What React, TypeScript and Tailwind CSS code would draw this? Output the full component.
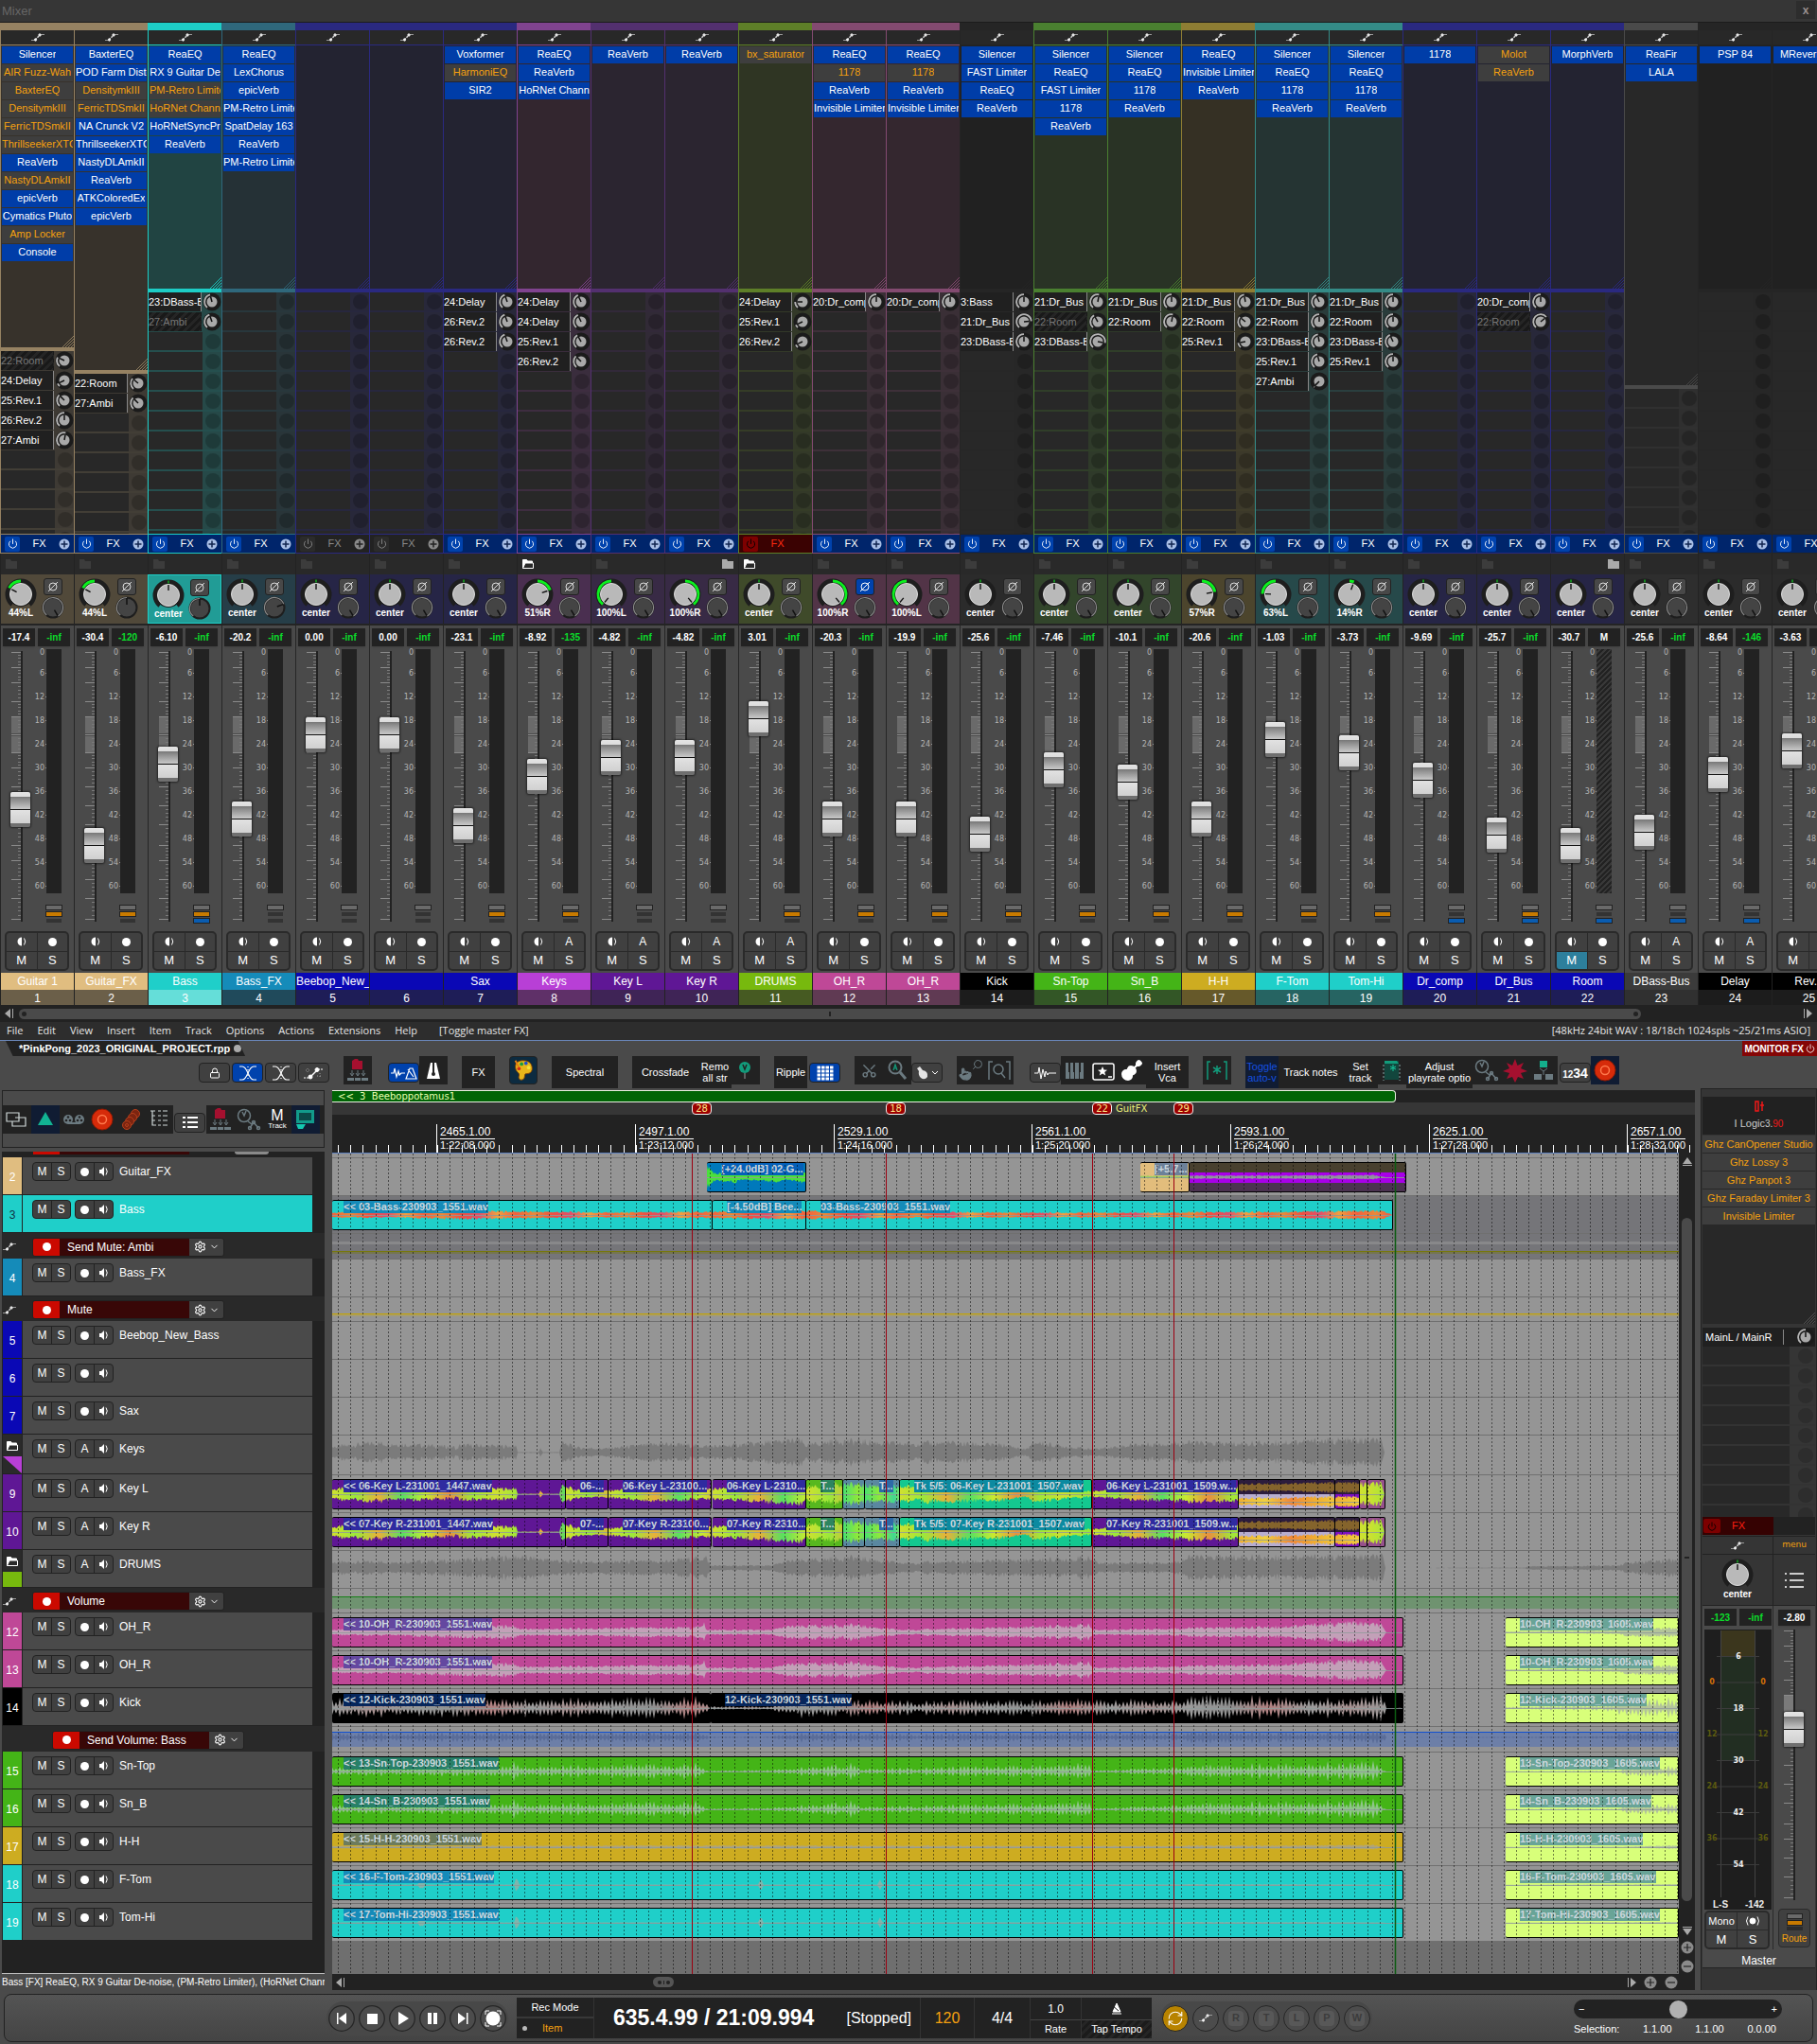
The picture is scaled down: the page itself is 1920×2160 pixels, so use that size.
import { Fragment, type ReactNode } from "react";
import clsx from "clsx";
import { Lock, Power, Settings, ChevronDown, Scissors, Search, Pointer, Palette, Guitar, RefreshCw } from "lucide-react";

/* ---------- palettes ---------- */

const palettes = {
  sand: { ink: "text-[#968262]", insert: "bg-[#37322b]", pan: "bg-[#51493a]", name: "bg-[#e0bd80]", num: "bg-[#6b5f49]" },
  teal: { ink: "text-[#1dcdc6]", insert: "bg-[#214442]", pan: "bg-[#219c96]", name: "bg-[#1fcfc9]", num: "bg-[#65ded9]" },
  steel: { ink: "text-[#2f687c]", insert: "bg-[#253136]", pan: "bg-[#263e48]", name: "bg-[#158bb9]", num: "bg-[#204a5b]" },
  navy: { ink: "text-[#2a2980]", insert: "bg-[#232331]", pan: "bg-[#262546]", name: "bg-[#0a08b5]", num: "bg-[#1e1d57]" },
  orchid: { ink: "text-[#80438f]", insert: "bg-[#33262f]", pan: "bg-[#4a2f50]", name: "bg-[#b83fd6]", num: "bg-[#5f3068]" },
  grape: { ink: "text-[#53306f]", insert: "bg-[#2b2530]", pan: "bg-[#382a45]", name: "bg-[#5f1795]", num: "bg-[#3f2456]" },
  olive: { ink: "text-[#5e7f28]", insert: "bg-[#2f3523]", pan: "bg-[#3f4a2a]", name: "bg-[#77b90e]", num: "bg-[#465a22]" },
  rose: { ink: "text-[#834a70]", insert: "bg-[#34272f]", pan: "bg-[#523447]", name: "bg-[#bf4897]", num: "bg-[#603a53]" },
  black: { ink: "text-[#252525]", insert: "bg-[#212121]", pan: "bg-[#2b2b2b]", name: "bg-[#000000]", num: "bg-[#1c1c1c]" },
  green: { ink: "text-[#4a8030]", insert: "bg-[#293325]", pan: "bg-[#32452b]", name: "bg-[#44b417]", num: "bg-[#335626]" },
  gold: { ink: "text-[#8e7d33]", insert: "bg-[#353024]", pan: "bg-[#4c452d]", name: "bg-[#cdac21]", num: "bg-[#66592a]" },
  aqua: { ink: "text-[#348b87]", insert: "bg-[#253433]", pan: "bg-[#26494a]", name: "bg-[#1fcfc9]", num: "bg-[#266462]" },
  grey: { ink: "text-[#4a4a4a]", insert: "bg-[#282828]", pan: "bg-[#2e2e2e]", name: "bg-[#3b3b3b]", num: "bg-[#303030]" },
};

type Tone = keyof typeof palettes;
type Send = [label: string, angle: number, muted?: boolean];

type Channel = {
  name: string;
  tone: Tone;
  fx: string[];
  sends?: Send[];
  pan: string;
  vol: string;
  peak?: string;
  fader: number;
  led?: string;
  auto?: boolean;
  insertHeight?: string;
  fxState?: "on" | "off" | "bypass";
  folder?: "open" | "close";
  flipped?: boolean;
  muted?: boolean;
};

// a leading "!" marks a bypassed plugin
const channels: Channel[] = [
  { name: "Guitar 1", tone: "sand", fx: ["Silencer", "!AIR Fuzz-Wah", "!BaxterEQ", "!DensitymkIII", "!FerricTDSmkII", "!ThrillseekerXTC", "ReaVerb", "!NastyDLAmkII", "epicVerb", "Cymatics Pluto", "!Amp Locker", "Console"], sends: [["22:Room", -65, true], ["24:Delay", -115], ["25:Rev.1", -45], ["26:Rev.2", 0], ["27:Ambi", 10]], pan: "44%L", vol: "-17.4", fader: 855, led: "o", insertHeight: "h-[319px]" },
  { name: "Guitar_FX", tone: "sand", fx: ["BaxterEQ", "POD Farm Disto", "!DensitymkIII", "!FerricTDSmkII", "NA Crunck V2", "ThrillseekerXTC", "NastyDLAmkII", "ReaVerb", "ATKColoredEx", "epicVerb"], sends: [["22:Room", -50], ["27:Ambi", -45]], pan: "44%L", vol: "-30.4", peak: "-120", fader: 893, led: "o", insertHeight: "h-[343px]" },
  { name: "Bass", tone: "teal", fx: ["ReaEQ", "RX 9 Guitar De", "!PM-Retro Limiter", "!HoRNet Chann", "HoRNetSyncPr", "ReaVerb"], sends: [["23:DBass-B", -15], ["27:Ambi", -20, true]], pan: "center", vol: "-6.10", fader: 807, led: "ob" },
  { name: "Bass_FX", tone: "steel", fx: ["ReaEQ", "LexChorus", "epicVerb", "PM-Retro Limiter", "SpatDelay 163", "ReaVerb", "PM-Retro Limiter"], pan: "center", vol: "-20.2", fader: 865 },
  { name: "Beebop_New_Bass", tone: "navy", fx: [], pan: "center", vol: "0.00", fader: 776, fxState: "off" },
  { name: "", tone: "navy", fx: [], pan: "center", vol: "0.00", fader: 776, fxState: "off" },
  { name: "Sax", tone: "navy", fx: ["Voxformer", "!HarmoniEQ", "SIR2"], sends: [["24:Delay", -20], ["26:Rev.2", -20], ["26:Rev.2", -20]], pan: "center", vol: "-23.1", fader: 872, led: "o" },
  { name: "Keys", tone: "orchid", fx: ["ReaEQ", "ReaVerb", "HoRNet Chann"], sends: [["24:Delay", -25], ["24:Delay", -25], ["25:Rev.1", -30], ["26:Rev.2", -45]], pan: "51%R", vol: "-8.92", peak: "-135", fader: 820, led: "o", auto: true, folder: "open" },
  { name: "Key L", tone: "grape", fx: ["ReaVerb"], pan: "100%L", vol: "-4.82", fader: 800, auto: true },
  { name: "Key R", tone: "grape", fx: ["ReaVerb"], pan: "100%R", vol: "-4.82", fader: 800, auto: true, folder: "close" },
  { name: "DRUMS", tone: "olive", fx: ["!bx_saturator"], sends: [["24:Delay", -90], ["25:Rev.1", -115], ["26:Rev.2", -115]], pan: "center", vol: "3.01", fader: 759, led: "o", auto: true, fxState: "bypass", folder: "open" },
  { name: "OH_R", tone: "rose", fx: ["ReaEQ", "!1178", "ReaVerb", "Invisible Limiter"], sends: [["20:Dr_comp", 0]], pan: "100%R", vol: "-20.3", fader: 865, led: "o", flipped: true },
  { name: "OH_R", tone: "rose", fx: ["ReaEQ", "!1178", "ReaVerb", "Invisible Limiter"], sends: [["20:Dr_comp", 0]], pan: "100%L", vol: "-19.9", fader: 865, led: "o" },
  { name: "Kick", tone: "black", fx: ["Silencer", "FAST Limiter", "ReaEQ", "ReaVerb"], sends: [["3:Bass", 0], ["21:Dr_Bus", 85], ["23:DBass-B", 0]], pan: "center", vol: "-25.6", fader: 881, led: "o" },
  { name: "Sn-Top", tone: "green", fx: ["Silencer", "ReaEQ", "FAST Limiter", "1178", "ReaVerb"], sends: [["21:Dr_Bus", 10], ["22:Room", -30, true], ["23:DBass-B", 100]], pan: "center", vol: "-7.46", fader: 813, led: "o" },
  { name: "Sn_B", tone: "green", fx: ["Silencer", "ReaEQ", "1178", "ReaVerb"], sends: [["21:Dr_Bus", 0], ["22:Room", 10]], pan: "center", vol: "-10.1", fader: 826, led: "o" },
  { name: "H-H", tone: "gold", fx: ["ReaEQ", "Invisible Limiter", "ReaVerb"], sends: [["21:Dr_Bus", -10], ["22:Room", -50], ["25:Rev.1", -100]], pan: "57%R", vol: "-20.6", fader: 865, led: "o" },
  { name: "F-Tom", tone: "aqua", fx: ["Silencer", "ReaEQ", "1178", "ReaVerb"], sends: [["21:Dr_Bus", -25], ["22:Room", 0], ["23:DBass-B", -10], ["25:Rev.1", -15], ["27:Ambi", -135]], pan: "63%L", vol: "-1.03", fader: 781, led: "o" },
  { name: "Tom-Hi", tone: "aqua", fx: ["Silencer", "ReaEQ", "1178", "ReaVerb"], sends: [["21:Dr_Bus", 0], ["22:Room", 0], ["23:DBass-B", -25], ["25:Rev.1", 0]], pan: "14%R", vol: "-3.73", fader: 795, led: "o" },
  { name: "Dr_comp", tone: "navy", fx: ["1178"], pan: "center", vol: "-9.69", fader: 824, led: "b" },
  { name: "Dr_Bus", tone: "navy", fx: ["!Molot", "!ReaVerb"], sends: [["20:Dr_comp", 0], ["22:Room", 50, true]], pan: "center", vol: "-25.7", fader: 882, led: "ob" },
  { name: "Room", tone: "navy", fx: ["MorphVerb"], pan: "center", vol: "-30.7", peak: "M", fader: 893, led: "b", muted: true, folder: "close" },
  { name: "DBass-Bus", tone: "grey", fx: ["ReaFir", "LALA"], pan: "center", vol: "-25.6", fader: 879, led: "b", auto: true, insertHeight: "h-[359px]" },
  { name: "Delay", tone: "black", fx: ["PSP 84"], pan: "center", vol: "-8.64", peak: "-146", fader: 818, led: "b", auto: true },
  { name: "Rev.1", tone: "black", fx: ["MReverbMB"], pan: "center", vol: "-3.63", fader: 793, led: "b", auto: true },
];

/* ---------- small drawings ---------- */

const polar = (cx: number, cy: number, r: number, deg: number) => {
  const a = ((deg - 90) * Math.PI) / 180;
  return [cx + r * Math.cos(a), cy + r * Math.sin(a)];
};

const arc = (cx: number, cy: number, r: number, from: number, to: number) => {
  const [a, b] = from < to ? [from, to] : [to, from];
  const [x1, y1] = polar(cx, cy, r, a);
  const [x2, y2] = polar(cx, cy, r, b);
  return `M${x1} ${y1}A${r} ${r} 0 ${b - a > 180 ? 1 : 0} 1 ${x2} ${y2}`;
};

const EnvelopeIcon = ({ className = "" }: { className?: string }) => (
  <svg viewBox="0 0 16 9" className={clsx("h-[9px] w-4", className)} fill="none" stroke="#ddd">
    <path d="M1 7.500h4M11 1.500h4" stroke="#999" />
    <path d="M5.500 7 10 2" strokeWidth="1.400" strokeDasharray="2 1" />
    <circle cx="5.500" cy="7" r="1.200" fill="#fff" />
    <circle cx="10" cy="2" r="1.200" fill="#fff" />
  </svg>
);

const PanKnob = ({ pan }: { pan: string }) => {
  const n = parseInt(pan) || 0;
  const deg = pan === "center" ? 0 : (pan.endsWith("L") ? -n : n) * 1.4;
  const [x, y] = polar(17, 17, 11, deg);
  const [x0, y0] = polar(17, 17, 5, deg);
  return (
    <svg viewBox="0 0 34 34" className="size-[34px]">
      <path d={arc(17, 17, 14, -140, 140)} stroke="#1e1e1e" strokeWidth="5" fill="none" />
      <circle cx="17" cy="17" r="13" fill="#1e1e1e" />
      <path d={deg ? arc(17, 17, 14, 0, deg) : "M17 1.500v3"} stroke="#0bf01e" strokeWidth={deg ? 3 : 1} fill="none" />
      <circle cx="17" cy="17" r="11.500" fill="#b9b9b9" stroke="#dcdcdc" />
      <path d={`M${x0} ${y0}L${x} ${y}`} stroke="#111" strokeWidth="1.400" />
    </svg>
  );
};

const WidthKnob = ({ deg }: { deg: number }) => {
  const [x, y] = polar(12, 12, 10, deg);
  const [x0, y0] = polar(12, 12, 3, deg);
  return (
    <svg viewBox="0 0 24 24" className="size-6">
      <circle cx="12" cy="12" r="10.500" fill="#444" stroke="#1e1e1e" strokeWidth="2" />
      <path d={arc(12, 12, 10.5, -140, deg)} stroke="#8a8a8a" strokeWidth="1.200" fill="none" />
      <path d={`M${x0} ${y0}L${x} ${y}`} stroke="#111" strokeWidth="1.500" />
    </svg>
  );
};

const SendKnob = ({ deg }: { deg: number }) => {
  const [x, y] = polar(10, 10, 5.5, deg);
  return (
    <svg viewBox="0 0 20 20" className="ml-px h-5 w-5 shrink-0">
      <circle cx="10" cy="10" r="9.500" fill="#1b1b1b" />
      <path d={arc(10, 10, 7.8, -140, deg)} stroke="#b5b5b5" strokeWidth="1.800" fill="none" />
      <circle cx="10" cy="10" r="5.500" fill="#a9a9a9" />
      <path d={`M10 10L${x} ${y}`} stroke="#111" strokeWidth="1.500" />
    </svg>
  );
};

const Hatch = () => (
  <svg viewBox="0 0 12 12" className="size-3" stroke="currentColor">
    <path d="M0 12 12 0M3 12l9-9M6 12l6-6M9 12l3-3" strokeWidth=".9" />
  </svg>
);

const PhaseIcon = () => (
  <svg viewBox="0 0 12 12" className="size-3" fill="none" stroke="currentColor">
    <circle cx="6" cy="6" r="4" />
    <path d="M1 11 11 1" />
  </svg>
);

const FolderIcon = ({ className }: { className: string }) => (
  <svg viewBox="0 0 12 10" className={clsx("h-[10px] w-3", className)} fill="currentColor">
    <path d="M0 0h5l1 2h6v8H0z" />
  </svg>
);

const OpenFolder = () => (
  <svg viewBox="0 0 12 10" className="h-[10px] w-3">
    <path d="M.5 9.500V.5h4l1 1.500h5v2" fill="#fff" stroke="#fff" />
    <path d="M.5 9.500 3 4h8.500v5.500z" fill="#2a2a2a" stroke="#fff" />
  </svg>
);

const SpeakerIcon = () => (
  <svg viewBox="0 0 12 12" className="size-3" fill="#fff">
    <path d="M1 4h2l3-3v10L3 8H1z" />
    <path d="M8 2.500q2.500 3.500 0 7" fill="none" stroke="#fff" />
  </svg>
);

const MonitorIcon = () => (
  <svg viewBox="0 0 12 12" className="size-3">
    <path d="M6 1.500a4.500 4.500 0 0 0 0 9z" fill="#fff" />
    <path d="M8.500 2.500q2.500 3.500 0 7" fill="none" stroke="#fff" />
  </svg>
);

const RecDot = () => <span className="size-[9px] rounded-full bg-white" />;

const RedFolder = () => (
  <svg viewBox="0 0 30 30" className="size-[30px]">
    <path d="M9 14V5l3-2h3l1 2h4v9z" fill="#a5102f" />
    <path d="M9 15v5m-2-2 2 3 2-3M15 15v5m-2-2 2 3 2-3M21 15v5m-2-2 2 3 2-3" stroke="#6b7a80" fill="none" />
    <path d="M4 23h7v3H4zM12 23h6v3h-6zM19 23h7v3h-7z" fill="#6b7a80" />
  </svg>
);

const ClockIcon = () => (
  <svg viewBox="0 0 30 30" className="size-[30px]" fill="none" stroke="#6b7a80" strokeWidth="1.500">
    <circle cx="10" cy="11" r="6.500" />
    <path d="m8 7 2 4 2-5M14 17l4 3M16 24l4-6 5 6" />
    <circle cx="16" cy="24" r="1.500" />
    <circle cx="20" cy="18" r="1.500" />
    <circle cx="25" cy="24" r="1.500" />
  </svg>
);

const RedRing = () => (
  <svg viewBox="0 0 30 30" className="size-[30px]">
    <circle cx="15" cy="15" r="11" fill="#d62b0a" stroke="#8c1a04" />
    <circle cx="15" cy="15" r="4.500" fill="none" stroke="#ff7a4d" strokeWidth="1.500" />
  </svg>
);

/* ---------- mixer ---------- */

const thumb =
  "[&::-webkit-slider-thumb]:appearance-none [&::-webkit-slider-thumb]:h-[37px] [&::-webkit-slider-thumb]:w-[21px] [&::-webkit-slider-thumb]:rounded-[2px] [&::-webkit-slider-thumb]:shadow-[0_0_2px_1px_rgba(0,0,0,.5)] [&::-webkit-slider-thumb]:bg-[linear-gradient(180deg,#e4e4e4_0,#dcdcdc_5px,#777_5px,#8c8c8c_8px,#c9c9c9_18px,#111_18px,#111_19px,#e2e2e2_19px,#d0d0d0_33px,#6f6f6f_33px)]";

const majorTicks = [1, 17, 33, 53, 69, 88, 107, 123, 143, 163, 183, 205, 221, 241, 261, 283];
const dbMarks = [0, 6, 12, 18, 24, 30, 36, 42, 48, 54, 60];

const FaderScale = () => (
  <svg viewBox="0 0 78 290" className="absolute top-[2px] left-0 h-[290px] w-[78px] overflow-visible">
    {majorTicks.map((y, i) => (
      <Fragment key={y}>
        <path d={`M11 ${y + 0.5}h10`} stroke="#8a8a8a" />
        {majorTicks[i + 1] &&
          [1, 2, 3, 4].map((k) => (
            <path key={k} d={`M18 ${Math.round(y + ((majorTicks[i + 1] - y) * k) / 5) + 0.5}h3`} stroke="#7c7c7c" />
          ))}
      </Fragment>
    ))}
    <path d="M11 70h10v17H11zM11 90h10v17H11z" fill="#777" opacity=".7" />
    <path d="M22 0v286" stroke="#222" strokeWidth="2" />
    {dbMarks.map((db, i) => {
      const y = i === 0 ? 1 : 23 + (i - 1) * 25;
      return (
        <Fragment key={db}>
          <text x="46" y={y + 3} fontSize="8" textAnchor="end" fill="#b4b4b4" className="font-['DejaVu_Sans']">
            {db}
          </text>
          {i > 0 && <path d={`M47 ${y + 0.5}h3`} stroke="#999" />}
        </Fragment>
      );
    })}
  </svg>
);

const padKey = "flex items-center justify-center text-white text-[13px] leading-none";

const ChannelStrip = ({ ch, index }: { ch: Channel; index: number }) => {
  const p = palettes[ch.tone];
  const sends = ch.sends ?? [];
  const state = ch.fxState ?? "on";

  return (
    <section aria-label={ch.name || `Track ${index}`} className={clsx("flex w-[78px] shrink-0 flex-col", p.ink)}>
      <div className="h-2 bg-current" />
      <div className="flex h-[532px] flex-col overflow-hidden border-l border-current bg-[#282828]">
        <button aria-label="Envelopes" className="flex h-4 shrink-0 items-center justify-center border-b border-current">
          <EnvelopeIcon />
        </button>
        <div className={clsx("relative flex shrink-0 flex-col gap-px px-px pt-px", p.insert, ch.insertHeight ?? "h-[257px]")}>
          {ch.fx.map((name, i) => {
            const off = name.startsWith("!");
            return (
              <button
                key={i}
                className={clsx(
                  "flex h-[18px] justify-center overflow-hidden text-[11px] leading-[17px] whitespace-nowrap",
                  off ? "bg-[#3e3e3e] text-[#f5a00f]" : "bg-[#003da8] text-white",
                )}
              >
                <span className="max-w-full overflow-hidden">{off ? name.slice(1) : name}</span>
              </button>
            );
          })}
          <div className="absolute right-0 bottom-0">
            <Hatch />
          </div>
        </div>
        <div className="h-1 shrink-0 bg-current" />
        <div className="flex flex-1 flex-col overflow-hidden bg-current/20">
          {sends.map(([label, deg, muted], i) => (
            <button key={i} className="mb-px flex h-5 shrink-0 items-center">
              <span
                className={clsx(
                  "h-5 w-[56px] overflow-hidden border-r bg-[#202020] text-left text-[11px] leading-5 whitespace-nowrap",
                  muted
                    ? "border-transparent bg-[repeating-linear-gradient(135deg,#191919_0_3px,#252525_3px_6px)] text-[#777]"
                    : "border-[#888] text-white",
                )}
              >
                {label}
              </span>
              <SendKnob deg={deg} />
            </button>
          ))}
          {Array.from({ length: 13 }, (_, i) => (
            <div key={i} className="flex h-[21px] shrink-0 items-center gap-[3px] border-b-2 border-current/5">
              <span className="h-full w-[57px] bg-[#282828]" />
              <span className="size-4 rounded-full bg-black/20" />
            </div>
          ))}
        </div>
      </div>
      <div
        className={clsx(
          "flex h-[21px] items-center justify-between border border-r-0 border-current px-1 text-[11px]",
          state === "on" && "bg-[#00256b]",
          state === "off" && "bg-[#222]",
          state === "bypass" && "bg-[#3a0202]",
        )}
      >
        <button
          aria-label="Bypass FX"
          className={clsx(
            "flex h-4 w-4 items-center justify-center rounded-[2px]",
            state === "on" && "bg-[#0042ad] text-white",
            state === "off" && "bg-[#2b2b2b] text-[#888]",
            state === "bypass" && "bg-[#7d0000] text-black",
          )}
        >
          <Power size={11} />
        </button>
        <button className={clsx(state === "on" ? "text-white" : state === "off" ? "text-[#8a8a8a]" : "text-[#ff2a10]")}>FX</button>
        {state === "bypass" ? (
          <span className="w-3" />
        ) : (
          <svg viewBox="0 0 12 12" className="size-3">
            <circle cx="6" cy="6" r="5.500" fill={state === "on" ? "#a9bfe6" : "#8a8a8a"} />
            <path d="M6 2.500v7M2.500 6h7" stroke={state === "on" ? "#10254f" : "#222"} strokeWidth="1.500" />
          </svg>
        )}
      </div>
      <div className="flex h-[22px] items-center border-l border-[#232323] bg-[#292929] px-[5px]">
        {ch.folder === "open" ? (
          <OpenFolder />
        ) : (
          <FolderIcon className={ch.folder === "close" ? "ml-auto text-[#aaa]" : "text-[#3c3c3c]"} />
        )}
      </div>
      <div
        className={clsx(
          "flex h-[52px] justify-between border-l px-1 pt-1",
          p.pan,
          ch.tone === "teal" ? "border border-[#1dcdc6]" : "border-[#232323]",
        )}
      >
        <div className="flex w-[34px] flex-col items-center">
          <PanKnob pan={ch.pan} />
          <span className="-mt-[3px] text-[10px] leading-3 font-semibold text-white">{ch.pan}</span>
        </div>
        <div className="flex flex-col items-center gap-px pr-[6px]">
          <button
            aria-label="Phase"
            className={clsx(
              "flex h-[18px] w-5 items-center justify-center rounded-[3px] border border-[#222]",
              ch.flipped ? "bg-[#0042ad] text-white" : "bg-[#484848] text-[#ddd]",
            )}
          >
            <PhaseIcon />
          </button>
          <WidthKnob deg={index === 2 || index === 3 ? 0 : index === 4 ? 70 : 150} />
        </div>
      </div>
      <div className="mt-[2px] flex h-[367px] flex-col border-l border-[#262626] bg-[#4a4a4a]">
        <div className="flex h-[25px] justify-between px-[2px] pt-[3px] text-[10px] font-bold">
          <span className="flex h-[19px] w-[34px] items-center justify-center bg-[#222] text-white shadow">{ch.vol}</span>
          <span className={clsx("mr-[2px] flex h-[19px] w-[34px] items-center justify-center bg-[#222] shadow", ch.peak === "M" ? "text-white" : "text-[#0bdc2a]")}>
            {ch.peak ?? "-inf"}
          </span>
        </div>
        <div className="relative h-[298px]">
          <FaderScale />
          <div
            className={clsx(
              "absolute top-0 left-[48px] h-[258px] w-4",
              ch.muted ? "bg-[repeating-linear-gradient(135deg,#222_0_2px,#383838_2px_4px)]" : "bg-[#222]",
            )}
          />
          <div className="absolute top-[270px] left-[47px] flex w-[18px] flex-col gap-px">
            <span className="h-[6px] border border-[#222] bg-[#6a6a6a]" />
            <span className={clsx("h-[6px] border", ch.led?.includes("o") ? "border-[#222] bg-[#c87a00]" : "border-[#4a4a4a] bg-[#333]")} />
            <span className={clsx("h-[6px] border", ch.led?.includes("b") ? "border-[#222] bg-[#0a5cb0]" : "border-[#4a4a4a] bg-[#333]")} />
          </div>
          <input
            type="range"
            aria-label={`${ch.name} volume`}
            min={0}
            max={249}
            defaultValue={249 - (ch.fader - 706)}
            className={clsx("absolute top-[2px] left-[10px] h-[286px] w-[21px] appearance-none bg-transparent [direction:rtl] [writing-mode:vertical-lr]", thumb)}
          />
        </div>
        <div className="mx-1 mr-[5px] grid h-[42px] grid-cols-2 grid-rows-2 gap-px overflow-hidden rounded-[5px] border-2 border-[#2a2a2a] bg-[#2a2a2a] *:bg-[#404040]">
          <button aria-label="Monitor" className={padKey}>
            <MonitorIcon />
          </button>
          <button aria-label="Record arm" className={padKey}>
            {ch.auto ? <span className="text-[12px]">A</span> : <RecDot />}
          </button>
          <button className={clsx(padKey, ch.muted && "!bg-[#2d7f9c]")}>M</button>
          <button className={padKey}>S</button>
        </div>
      </div>
      <div className={clsx("h-[18px] overflow-hidden border-l border-[#222] text-center text-[12px] leading-[18px] whitespace-nowrap text-white", p.name)}>
        {ch.name}
      </div>
      <div className={clsx("h-4 border-l border-[#222] text-center text-[12px] leading-[18px] text-white", p.num)}>{index}</div>
    </section>
  );
};

const Mixer = () => (
  <div className="bg-[#242424]">
    <header className="flex h-6 items-start justify-between border-b border-[#1c1c1c] bg-[#363636] pl-[2px] text-[13px] text-[#666]">
      <h1 className="leading-6">Mixer</h1>
      <button aria-label="Close mixer" className="mt-px mr-[2px] h-[19px] w-5 bg-[#2d2d2d] text-[12px] font-bold text-[#998f8f]">
        x
      </button>
    </header>
    <div className="flex overflow-hidden">
      {channels.map((ch, i) => (
        <ChannelStrip key={i} ch={ch} index={i + 1} />
      ))}
    </div>
    <div className="flex h-[18px] items-center gap-[5px] bg-[#222] px-[5px]">
      <svg viewBox="0 0 10 10" className="size-[10px]" fill="#aaa">
        <path d="M6 0v10L0 5zM8 0h1v10H8z" />
      </svg>
      <div className="flex h-[11px] w-[1714px] items-center justify-between rounded-full bg-[#4a4a4a] px-[3px]">
        <span className="size-[5px] rounded-full bg-[#222]" />
        <span className="h-[5px] w-[2px] bg-[#222]" />
        <span className="size-[5px] rounded-full bg-[#222]" />
      </div>
      <svg viewBox="0 0 10 10" className="ml-auto size-[10px]" fill="#aaa">
        <path d="M4 0v10l6-5zM1 0h1v10H1z" />
      </svg>
    </div>
  </div>
);

/* ---------- menu and toolbar ---------- */

const MenuBar = () => (
  <nav className="flex h-5 items-center justify-between border-b border-[#6a86b8] bg-[#2d2d2d] px-[7px] font-['Open_Sans'] text-[11px] text-[#e6e6e6]">
    <div className="flex gap-[15px]">
      {["File", "Edit", "View", "Insert", "Item", "Track", "Options", "Actions", "Extensions", "Help"].map((m) => (
        <button key={m}>{m}</button>
      ))}
      <button className="ml-2">[Toggle master FX]</button>
    </div>
    <span>[48kHz 24bit WAV : 18/18ch 1024spls ~25/21ms ASIO]</span>
  </nav>
);

const RoundTool = ({ label, active, children }: { label: string; active?: boolean; children: ReactNode }) => (
  <button
    aria-label={label}
    className={clsx(
      "mt-[7px] flex h-[21px] w-[33px] shrink-0 items-center justify-center rounded-[4px] border border-[#222] text-white",
      active ? "bg-[#0042ad]" : "bg-[#404040]",
    )}
  >
    {children}
  </button>
);

const IconTool = ({ label, className, children }: { label: string; className?: string; children: ReactNode }) => (
  <button aria-label={label} className={clsx("flex h-[30px] w-[30px] shrink-0 items-center justify-center", className ?? "bg-[#222] text-[#6b7a80]")}>
    {children}
  </button>
);

const TextTool = ({ className, children }: { className: string; children: ReactNode }) => (
  <button className={clsx("h-[34px] shrink-0 overflow-hidden text-center text-[11px] leading-3", className)}>{children}</button>
);

const CrossIcon = () => (
  <svg viewBox="0 0 20 16" className="h-4 w-5" fill="none" stroke="#fff" strokeWidth="1.200">
    <path d="M1 1h3q3 0 6 7t6 7h3M1 15h3q3 0 6-7t6-7h3" />
    <path d="M10 1v14" strokeDasharray="1 2" />
  </svg>
);

const Toolbar = () => (
  <div className="flex h-9 min-w-0 items-start overflow-hidden pl-[210px] text-white">
    <div className="flex gap-[2px]">
      <RoundTool label="Lock">
        <Lock size={12} />
      </RoundTool>
      <RoundTool label="Auto crossfade" active>
        <CrossIcon />
      </RoundTool>
      <RoundTool label="Crossfade">
        <CrossIcon />
      </RoundTool>
      <RoundTool label="Envelope move">
        <svg viewBox="0 0 24 16" className="h-4 w-6" fill="none" stroke="#fff">
          <path d="M1 13h6M16 4h6" strokeDasharray="2 1" />
          <path d="m8 12 7-7" strokeWidth="1.400" />
          <path d="M5 3v6M18 8v6M3 5h5M15 11h6" stroke="#999" strokeDasharray="1 2" />
          <circle cx="8" cy="12" r="2" fill="#fff" />
          <circle cx="15" cy="4.500" r="2" fill="#fff" />
        </svg>
      </RoundTool>
    </div>
    <div className="ml-[15px]">
      <IconTool label="Folder">
        <RedFolder />
      </IconTool>
    </div>
    <div className="ml-[17px] flex">
      <RoundTool label="Stretch" active>
        <svg viewBox="0 0 28 16" className="h-4 w-7" fill="none" stroke="#fff" strokeWidth="1.200">
          <path d="M0 8h3l1-5 2 9 2-6 1 4 2-2h4M16 14l4-11h3l4 11zM18 4l6 8" />
        </svg>
      </RoundTool>
      <IconTool label="Metronome">
        <svg viewBox="0 0 30 30" className="size-[30px]" fill="#fff">
          <path d="M12 7h6l4 17H8z" />
          <path d="M15 6v13" stroke="#222" strokeWidth="2" />
          <circle cx="15" cy="19" r="2" fill="#222" />
        </svg>
      </IconTool>
    </div>
    <TextTool className="ml-[15px] w-[35px] bg-[#222]">FX</TextTool>
    <IconTool label="Colours" className="ml-[15px] rounded border border-[#222] bg-[#0c2b40]">
      <svg viewBox="0 0 30 30" className="size-[28px]">
        <path d="M15 4c7 0 10 4 10 9s-4 6-7 6c-2 0-1 3-2 5s-5 3-6 0c-1-2 1-3 0-5s-4-3-4-8 4-7 9-7z" fill="#e8b61a" stroke="#7a3d08" />
        <circle cx="13" cy="8" r="2" fill="#1a9c3c" />
        <circle cx="18" cy="7" r="2" fill="#1b4fd0" />
        <circle cx="21" cy="12" r="2" fill="#f3e23c" />
        <circle cx="10" cy="13" r="2" fill="#d02a1a" />
        <path d="m6 4 4 8" stroke="#e67c12" strokeWidth="2" />
      </svg>
    </IconTool>
    <TextTool className="ml-[15px] w-[70px] bg-[#222]">Spectral</TextTool>
    <TextTool className="ml-[15px] w-[70px] bg-[#222]">Crossfade</TextTool>
    <TextTool className="w-[35px] bg-[#222]">
      Remo
      <br />
      all str
    </TextTool>
    <IconTool label="Pin">
      <svg viewBox="0 0 30 30" className="size-[30px]">
        <circle cx="14" cy="12" r="6" fill="#129b7b" />
        <path d="m12 9 2 5 2-5" fill="none" stroke="#222" strokeWidth="1.500" />
        <path d="M14 18v6" stroke="#999" />
      </svg>
    </IconTool>
    <TextTool className="ml-[15px] w-[35px] bg-[#222]">Ripple</TextTool>
    <div className="ml-[2px]">
      <RoundTool label="Grid" active>
        <svg viewBox="0 0 18 16" className="h-4 w-[18px]" fill="#fff">
          {[0, 1, 2, 3].map((r) => [0, 1, 2, 3].map((c) => <rect key={`${r}${c}`} x={c * 4.5 + 0.5} y={r * 4 + 0.5} width="3.500" height="3" />))}
        </svg>
      </RoundTool>
    </div>
    <IconTool label="Cut" className="ml-[15px] bg-[#222] text-[#6b7a80]">
      <Scissors size={17} className="-rotate-90" />
    </IconTool>
    <IconTool label="Zoom all">
      <svg viewBox="0 0 30 30" className="size-[30px]" fill="none" stroke="#6b7a80" strokeWidth="2">
        <circle cx="13" cy="12" r="6.500" />
        <path d="m18 17 6 7" strokeWidth="3" />
        <path d="m11 15 2-6 2 6M12 13h2" stroke="#129b7b" strokeWidth="1.200" />
      </svg>
    </IconTool>
    <RoundTool label="Glue">
      <svg viewBox="0 0 26 16" className="h-4 w-[26px]">
        <path d="m2 3 3-2 3 4q6 1 5 7-3 4-7 1-3-3-2-7z" fill="#e4e4e4" />
        <path d="m18 6 3 3 3-3" stroke="#fff" fill="none" />
      </svg>
    </RoundTool>
    <div className="ml-[15px] flex">
      <IconTool label="Hand zoom">
        <Pointer size={14} className="mt-2" fill="currentColor" />
        <Search size={12} className="mb-3 -scale-x-100" />
      </IconTool>
      <IconTool label="Zoom selection">
        <svg viewBox="0 0 30 30" className="size-[30px]" fill="none" stroke="#6b7a80" strokeWidth="1.500">
          <path d="M8 6H4v19M22 6h4v19M17 18l4 5" />
          <circle cx="14" cy="14" r="5" />
        </svg>
      </IconTool>
    </div>
    <div className="ml-[17px] flex">
      <RoundTool label="Peaks">
        <svg viewBox="0 0 24 16" className="h-4 w-6" fill="none" stroke="#fff">
          <path d="M0 8h4l1-6 2 12 2-10 2 8 1-6 2 4 1-2h8" />
        </svg>
      </RoundTool>
      <IconTool label="Piano roll">
        <svg viewBox="0 0 30 30" className="size-[30px]" fill="#6b7a80">
          <path d="M5 7h4v17H5zM10 7h4v17h-4zM15 7h4v17h-4zM20 7h4v17h-4z" />
          <path d="M8 7h2v10H8zM13 7h2v10h-2zM19 7h2v10h-2z" fill="#222" />
        </svg>
      </IconTool>
      <IconTool label="Scripts" className="bg-[#222]">
        <svg viewBox="0 0 30 30" className="size-[30px]" fill="none" stroke="#fff" strokeWidth="1.500">
          <rect x="4" y="8" width="22" height="17" rx="2" />
          <path d="m14 11 1.500 3.500 3.500.3-2.800 2.300 1 3.500-3.200-2-3.200 2 1-3.500L9 14.800l3.500-.3z" fill="#fff" stroke="none" />
          <path d="M20 22h4" />
        </svg>
      </IconTool>
      <IconTool label="Guitar" className="bg-[#222] text-white">
        <Guitar size={24} fill="#fff" />
      </IconTool>
    </div>
    <TextTool className="w-[45px] bg-[#222]">
      Insert
      <br />
      Vca
    </TextTool>
    <IconTool label="New take" className="ml-[15px] bg-[#222] text-[#129b7b]">
      <svg viewBox="0 0 30 30" className="size-[30px]" fill="none" stroke="currentColor" strokeWidth="1.500">
        <path d="M8 6H5v19M22 6h3v19M15 10v9M11 12l8 5M19 12l-8 5" />
      </svg>
    </IconTool>
    <TextTool className="ml-[15px] w-[35px] bg-[#101c33] text-[#1450e0]">
      Toggle
      <br />
      auto-v
    </TextTool>
    <TextTool className="w-[68px] bg-[#222]">Track notes</TextTool>
    <TextTool className="w-[37px] bg-[#222]">
      Set
      <br />
      track
    </TextTool>
    <IconTool label="Fit item">
      <svg viewBox="0 0 30 30" className="size-[30px]">
        <path d="M7 5h15v20H7z" fill="#12463d" />
        <path d="M7 5h13l2 3H7z" fill="#129b7b" />
        <path d="M16 9v7m-3-5 6 3m0-3-6 3" stroke="#14c79c" />
        <path d="M6 9v17M23 9v17" stroke="#8aa" strokeDasharray="2 2" />
      </svg>
    </IconTool>
    <TextTool className="w-[70px] bg-[#222]">
      Adjust
      <br />
      playrate optio
    </TextTool>
    <IconTool label="Time map">
      <ClockIcon />
    </IconTool>
    <IconTool label="Burst">
      <svg viewBox="0 0 30 30" className="size-[30px]" fill="#a5102f">
        <path d="m15 3 2.500 7 6.500-3-3 6 7 3-7 2 3 6-6-2-3 6-3-6-6 2 3-6-7-2 7-3-3-6 6 3z" />
      </svg>
    </IconTool>
    <IconTool label="Routing">
      <svg viewBox="0 0 30 30" className="size-[30px]">
        <path d="M11 5h8v7h-8z" fill="#14b08c" />
        <path d="m11 13 4 3 4-3M15 16v4" stroke="#6b7a80" fill="none" />
        <path d="M5 19h8v6H5zM17 19h8v6h-8z" fill="#6b7a80" />
      </svg>
    </IconTool>
    <div className="ml-[2px] flex">
      <RoundTool label="Count in">
        <span className="text-[14px] leading-none font-bold">
          <small className="text-[10px]">12</small>34
        </span>
      </RoundTool>
      <IconTool label="Record mode" className="bg-[#101c33]">
        <RedRing />
      </IconTool>
    </div>
  </div>
);

/* ---------- arrange data ---------- */

type Wave = { profile: [number, number][]; spiky?: boolean };
type Clip = { from: number; to: number; label?: string; tone: string; wave?: string; pad?: number };
type Row = {
  kind: "track" | "env";
  h: string;
  no?: number;
  name: string;
  tone?: Tone;
  auto?: boolean;
  indent?: boolean;
  folder?: boolean;
  lane?: string;
  clips?: Clip[];
  sum?: string;
};

// clip positions count from the left edge of the arrange view
const waves: Record<string, Wave> = {
  guitar: { profile: [[396, 14], [405, 4], [425, 7], [435, 3], [470, 6], [480, 3], [530, 12], [545, 4], [580, 7], [600, 5]] },
  bass: { profile: [[0, 3], [80, 4], [140, 5], [300, 3], [520, 5], [700, 3], [850, 3], [1000, 4], [1100, 5], [1112, 4], [1121, 0], [1423, 0]] },
  keys: { profile: [[0, 7], [45, 12], [130, 7], [131, 3], [135, 9], [195, 8], [196, 0.5], [218, 0.5], [220, 5], [223, 0.5], [240, 0.5], [242, 12], [260, 6], [289, 5], [349, 11], [394, 8], [409, 8], [494, 15], [501, 9], [534, 15], [600, 11], [650, 12], [710, 9], [733, 4], [744, 13], [758, 10], [803, 4], [850, 10], [900, 12], [960, 11], [1050, 15], [1108, 15], [1112, 0], [1423, 0]] },
  drums: { profile: [[0, 7], [130, 9], [194, 14], [249, 8], [349, 8], [395, 13], [400, 3], [465, 3], [480, 8], [550, 13], [600, 6], [710, 9], [800, 12], [810, 6], [890, 7], [906, 13], [1050, 14], [1110, 14], [1113, 0], [1260, 0.5], [1263, 2], [1360, 3], [1365, 6], [1423, 10]] },
  oh: { profile: [[0, 3], [190, 8], [200, 4], [385, 6], [393, 12], [395, 3], [465, 3], [480, 7], [550, 9], [600, 3], [720, 6], [800, 9], [804, 3], [900, 5], [1000, 7], [1080, 12], [1108, 9], [1114, 0], [1262, 1], [1360, 2], [1365, 5], [1423, 5]] },
  kick: { profile: [[0, 11], [200, 10], [390, 12], [398, 2], [460, 2], [500, 11], [600, 8], [800, 10], [804, 9], [900, 11], [906, 15], [1080, 10], [1110, 15], [1114, 0], [1262, 2], [1355, 4], [1360, 10], [1423, 11]], spiky: true },
  snare: { profile: [[0, 5], [185, 6], [192, 13], [200, 6], [390, 9], [395, 1], [465, 2], [550, 9], [560, 3], [800, 9], [804, 1], [906, 7], [1100, 11], [1113, 0], [1262, 0.5], [1360, 1], [1365, 6], [1423, 6]], spiky: true },
  hat: { profile: [[0, 1.5], [400, 2], [800, 1.5], [1100, 2.5], [1113, 0], [1360, 0.5], [1423, 2]] },
  tom: { profile: [[0, 0.5], [90, 0.5], [95, 6], [99, 0.5], [192, 0.5], [195, 10], [198, 0.5], [450, 0.5], [453, 8], [456, 0.5], [576, 0.5], [579, 8], [582, 0.5], [1000, 1], [1110, 0.5], [1113, 0], [1360, 0.5], [1423, 1]] },
};

const clipTones: Record<string, { body: string; label: string; wave: string }> = {
  teal: { body: "bg-[#1fcfc9]", label: "bg-[#158bb9]", wave: "url(#hot)" },
  tomteal: { body: "bg-[#1fcfc9]", label: "bg-[#158bb9]", wave: "#7fb5ac" },
  blue: { body: "bg-[#0079bb]", label: "bg-[#0560b8]", wave: "#4be03c" },
  peach: { body: "bg-[#e2bd7c]", label: "bg-[#6d8199]", wave: "#9ccf60" },
  layered: { body: "bg-[linear-gradient(180deg,#48402f_0_10px,#a800e8_10px_21px,#4b3350_21px)]", label: "", wave: "#8f8fa0" },
  purple: { body: "bg-[#5f1795]", label: "bg-[#2f2ba0]", wave: "url(#vivid)" },
  lightgreen: { body: "bg-[#57b81f]", label: "bg-[#2d8560]", wave: "url(#vivid)" },
  slate: { body: "bg-[#5a88a0]", label: "bg-[#2d6aa8]", wave: "url(#lush)" },
  mint: { body: "bg-[#14c890]", label: "bg-[#0c8aa0]", wave: "url(#vivid)" },
  split: { body: "bg-[linear-gradient(180deg,#2c1c3c_0_15px,#b8aed0_15px)]", label: "", wave: "url(#amber)" },
  splitviolet: { body: "bg-[linear-gradient(180deg,#2c1c3c_0_15px,#7d10c4_15px)]", label: "", wave: "url(#amber)" },
  mauve: { body: "bg-[#96508c]", label: "", wave: "url(#vivid)" },
  pink: { body: "bg-[#bf4897]", label: "bg-[#6448a0]", wave: "#c3a0b8" },
  black: { body: "bg-black", label: "bg-[#06265c]", wave: "url(#ash)" },
  green: { body: "bg-[#44b417]", label: "bg-[#288068]", wave: "#8fc58a" },
  gold: { body: "bg-[#cdac21]", label: "bg-[#6d7c5c]", wave: "#b3a573" },
  lime: { body: "bg-[#d8ff7a]", label: "bg-[#69a497]", wave: "#b3c49a" },
};

const keyClips = (n: string, side: string): Clip[] => [
  { from: 0, to: 247, label: `<< ${n}-Key ${side}-231001_1447.wav`, tone: "purple", pad: 12 },
  { from: 247, to: 292, label: `${n}-...`, tone: "purple" },
  { from: 292, to: 401, label: `${n}-Key ${side}-23100...`, tone: "purple" },
  { from: 402, to: 501, label: `${n}-Key ${side}-2310...`, tone: "purple" },
  { from: 501, to: 540, label: "T...", tone: "lightgreen" },
  { from: 540, to: 563, tone: "slate" },
  { from: 563, to: 600, label: "T...", tone: "slate" },
  { from: 600, to: 803, label: `Tk 5/5: ${n}-Key ${side}-231001_1507.wav`, tone: "mint" },
  { from: 803, to: 958, label: `${n}-Key ${side}-231001_1509.w...`, tone: "purple" },
  { from: 958, to: 1060, tone: "split" },
  { from: 1060, to: 1086, tone: "splitviolet" },
  { from: 1086, to: 1094, tone: "mauve" },
  { from: 1094, to: 1113, tone: "mauve" },
];

const drumClips = (file: string, tone: string, wave: string): Clip[] => [
  { from: 0, to: 1132, label: `<< ${file}-230903_1551.wav`, tone, wave, pad: 12 },
  { from: 1240, to: 1423, label: `${file}-230903_1605.wav`, tone: "lime", wave },
];

const rows: Row[] = [
  { kind: "track", h: "h-[40px]", no: 2, name: "Guitar_FX", tone: "sand", clips: [
    { from: 396, to: 501, label: "[+24.0dB] 02-G...", tone: "blue", wave: "guitar" },
    { from: 854, to: 906, label: "[+5.7...", tone: "peach", wave: "hat" },
    { from: 906, to: 1135, tone: "layered", wave: "hat" },
  ] },
  { kind: "track", h: "h-[40px]", no: 3, name: "Bass", tone: "teal", lane: "bg-[#757579]", clips: [
    { from: 0, to: 402, label: "<< 03-Bass-230903_1551.wav", tone: "teal", wave: "bass", pad: 12 },
    { from: 402, to: 501, label: "[-4.50dB] Bee...", tone: "teal", wave: "bass" },
    { from: 501, to: 1121, label: "03-Bass-230903_1551.wav", tone: "teal", wave: "bass" },
  ] },
  { kind: "env", h: "h-[27px]", name: "Send Mute: Ambi", lane: "bg-[linear-gradient(180deg,#757579_0_8px,#88888a_8px_11px,#757579_11px_18px,#77770c_18px_19px,#757550_19px_21px,#757579_21px)]" },
  { kind: "track", h: "h-[40px]", no: 4, name: "Bass_FX", tone: "steel" },
  { kind: "env", h: "h-[26px]", name: "Mute", lane: "bg-[linear-gradient(180deg,#959595_0_17px,#c5a300_17px_18px,#a59c70_18px_20px,#959595_20px)]" },
  { kind: "track", h: "h-[40px]", no: 5, name: "Beebop_New_Bass", tone: "navy" },
  { kind: "track", h: "h-[40px]", no: 6, name: "", tone: "navy" },
  { kind: "track", h: "h-[40px]", no: 7, name: "Sax", tone: "navy" },
  { kind: "track", h: "h-[42px]", no: 8, name: "Keys", tone: "orchid", auto: true, folder: true, sum: "keys" },
  { kind: "track", h: "h-[40px]", no: 9, name: "Key L", tone: "grape", auto: true, indent: true, clips: keyClips("06", "L") },
  { kind: "track", h: "h-[40px]", no: 10, name: "Key R", tone: "grape", auto: true, indent: true, clips: keyClips("07", "R") },
  { kind: "track", h: "h-[40px]", no: 11, name: "DRUMS", tone: "olive", auto: true, folder: true, sum: "drums" },
  { kind: "env", h: "h-[26px]", name: "Volume", lane: "bg-[linear-gradient(180deg,#959595_0_8px,#178017_8px_9px,#6f9370_9px_21px,#959595_21px)]" },
  { kind: "track", h: "h-[40px]", no: 12, name: "OH_R", tone: "rose", indent: true, clips: drumClips("10-OH_R", "pink", "oh") },
  { kind: "track", h: "h-[40px]", no: 13, name: "OH_R", tone: "rose", indent: true, clips: drumClips("10-OH_R", "pink", "oh") },
  { kind: "track", h: "h-[40px]", no: 14, name: "Kick", tone: "black", indent: true, clips: [
    { from: 0, to: 400, label: "<< 12-Kick-230903_1551.wav", tone: "black", wave: "kick", pad: 12 },
    { from: 400, to: 1132, label: "12-Kick-230903_1551.wav", tone: "black", wave: "kick" },
    { from: 1240, to: 1423, label: "12-Kick-230903_1605.wav", tone: "lime", wave: "kick" },
  ] },
  { kind: "env", h: "h-[27px]", name: "Send Volume: Bass", indent: true, lane: "bg-[linear-gradient(180deg,#959595_0_5px,#1050d0_5px_6px,#6d7fa8_6px_21px,#959595_21px)]", sum: "kick" },
  { kind: "track", h: "h-[40px]", no: 15, name: "Sn-Top", tone: "green", indent: true, clips: drumClips("13-Sn-Top", "green", "snare") },
  { kind: "track", h: "h-[40px]", no: 16, name: "Sn_B", tone: "green", indent: true, clips: drumClips("14-Sn_B", "green", "snare") },
  { kind: "track", h: "h-[40px]", no: 17, name: "H-H", tone: "gold", indent: true, clips: drumClips("15-H-H", "gold", "hat") },
  { kind: "track", h: "h-[40px]", no: 18, name: "F-Tom", tone: "teal", indent: true, clips: drumClips("16-F-Tom", "tomteal", "tom") },
  { kind: "track", h: "h-[40px]", no: 19, name: "Tom-Hi", tone: "teal", indent: true, clips: drumClips("17-Tom-Hi", "tomteal", "tom") },
];

/* ---------- waveforms ---------- */

const noise = (n: number) => {
  const s = Math.sin(n * 12.9898) * 43758.5453;
  return s - Math.floor(s);
};

const level = (profile: [number, number][], x: number) => {
  for (let i = 1; i < profile.length; i++) {
    const [x1, a1] = profile[i - 1];
    const [x2, a2] = profile[i];
    if (x <= x2) return x < x1 ? a1 : a1 + ((a2 - a1) * (x - x1)) / (x2 - x1);
  }
  return 0;
};

const wavePath = (wave: Wave, from: number, to: number, mid: number, gain = 1) => {
  const step = wave.spiky ? 2 : 1;
  let top = "";
  let bottom = "";
  let i = 0;
  for (let x = from; x <= to; x += step, i++) {
    const dip = wave.spiky && i % 2 ? 0.15 : 1;
    const a = level(wave.profile, x) * (0.5 + 0.6 * noise(x + 3)) * dip * gain;
    top += `${i ? "L" : "M"}${x - from} ${(mid - a).toFixed(1)}`;
    bottom = `L${x - from} ${(mid + a * (0.8 + 0.2 * noise(x))).toFixed(1)}` + bottom;
  }
  return `${top}${bottom}Z`;
};

const ClipBox = ({ clip }: { clip: Clip }) => {
  const tone = clipTones[clip.tone];
  const w = clip.to - clip.from;
  const split = clip.tone.startsWith("split");
  return (
    <div
      className={clsx("absolute top-1 h-8 overflow-hidden rounded-[2px] border border-l-0 border-black", clip.from > 0 && "border-l", tone.body)}
      style={{ left: clip.from, width: w }}
    >
      <svg width={w} height="30" className="absolute top-0 left-0">
        {split && <path d={wavePath(waves.keys, clip.from, clip.to, 8, 0.4)} fill="#85642c" />}
        <path d={wavePath(waves[clip.wave ?? "keys"], clip.from, clip.to, split ? 23 : 15, split ? 0.4 : clip.wave ? 1 : 0.85)} fill={tone.wave} />
        <path d={`M0 ${split ? 23.5 : 15.5}H${w}`} stroke="#8f9a9a" opacity=".8" />
      </svg>
      {clip.label && (
        <span
          className={clsx(
            "relative block h-[13px] w-fit max-w-full overflow-hidden text-[11px] leading-[13px] font-bold whitespace-nowrap text-[#ccd6dc]",
            tone.label,
            clip.pad ? "ml-3" : "ml-[15px]",
          )}
        >
          {clip.label}
        </span>
      )}
    </div>
  );
};

const WaveDefs = () => {
  const sets: [string, number, string[]][] = [
    ["hot", 97, ["#f4603c", "#e98a3a", "#f05040", "#e0506a", "#f0a040", "#f4603c"]],
    ["vivid", 173, ["#d0e030", "#9be83a", "#e8b03a", "#58e060", "#c8ea30", "#e89040", "#a0e838", "#d0e030"]],
    ["lush", 61, ["#48e070", "#8fe83a", "#40d890", "#c8ea30", "#48e070"]],
    ["amber", 83, ["#f0b030", "#f0d040", "#f08838", "#f0b030"]],
    ["ash", 211, ["#9a9a9a", "#a58f8f", "#9a9a9a", "#8f8f8f", "#b08080", "#9a9a9a"]],
  ];
  return (
    <svg className="absolute size-0" aria-hidden>
      <defs>
        {sets.map(([id, len, colors]) => (
          <linearGradient key={id} id={id} gradientUnits="userSpaceOnUse" x1="0" x2={len} y1="0" y2="0" spreadMethod="repeat">
            {colors.map((c, i) => (
              <stop key={i} offset={i / (colors.length - 1)} stopColor={c} />
            ))}
          </linearGradient>
        ))}
      </defs>
    </svg>
  );
};

/* ---------- track control panel ---------- */

const TcpToolbar = () => (
  <div className="flex h-[61px] shrink-0 items-center overflow-hidden border border-[#222] text-[#6b7a80]">
    <IconTool label="Windows">
      <svg viewBox="0 0 30 30" className="size-[30px]" fill="none" stroke="#cfd8d8" strokeWidth="1.200">
        <path d="M4 8h13v9H4zM13 13h11v9H10v-5" />
      </svg>
    </IconTool>
    <IconTool label="Triangle" className="bg-[#101c33]">
      <svg viewBox="0 0 30 30" className="size-[30px]" fill="#12b393">
        <path d="m15 7 8 14H7z" />
      </svg>
    </IconTool>
    <IconTool label="Reels">
      <svg viewBox="0 0 30 30" className="size-[30px]" fill="#6b7a80">
        <circle cx="9" cy="15" r="5" />
        <circle cx="21" cy="15" r="5" />
        <path d="M9 18h12v2H9z" />
        <g fill="#222">
          <circle cx="9" cy="12.500" r="1.300" />
          <circle cx="7" cy="16" r="1.300" />
          <circle cx="11" cy="16" r="1.300" />
          <circle cx="21" cy="12.500" r="1.300" />
          <circle cx="19" cy="16" r="1.300" />
          <circle cx="23" cy="16" r="1.300" />
        </g>
      </svg>
    </IconTool>
    <IconTool label="Record">
      <RedRing />
    </IconTool>
    <IconTool label="Takes">
      <svg viewBox="0 0 30 30" className="size-[30px]" fill="#7c2410" stroke="#b5401c">
        {[0, 1, 2, 3].map((i) => (
          <circle key={i} cx={20 - i * 3} cy={9 + i * 4} r="4.500" />
        ))}
        <circle cx="11" cy="21" r="1.500" fill="none" />
      </svg>
    </IconTool>
    <IconTool label="Tracks">
      <svg viewBox="0 0 30 30" className="size-[30px]" fill="none" stroke="#cfd8d8" strokeWidth="1.200">
        <path d="M6 6h5M8 6v15h4M8 11h3M8 16h3M14 6h3M19 6h5M14 11h3M19 11h5M14 16h3M19 16h5M14 21h3M19 21h5" />
      </svg>
    </IconTool>
    <div className="mx-px">
      <RoundTool label="List">
        <svg viewBox="0 0 16 14" className="h-[14px] w-4" stroke="#fff" strokeWidth="2">
          <path d="M0 2h3M5 2h11M0 7h3M5 7h11M0 12h3M5 12h11" />
        </svg>
      </RoundTool>
    </div>
    <IconTool label="Folder">
      <RedFolder />
    </IconTool>
    <IconTool label="Time map">
      <ClockIcon />
    </IconTool>
    <IconTool label="M track" className="flex-col bg-[#222] text-white">
      <span className="text-[16px] leading-[14px]">M</span>
      <span className="text-[8px] leading-[8px]">Track</span>
    </IconTool>
    <IconTool label="Screen" className="bg-[#101c33]">
      <svg viewBox="0 0 30 30" className="size-[30px]">
        <path d="M5 5h19v14H5z" fill="#129b8b" />
        <path d="M8 8h13v8H8z" fill="#0b4a48" />
        <path d="M5 20h10l-3 5H7z" fill="#14c7b0" />
      </svg>
    </IconTool>
    <div className="h-[30px] flex-1 bg-[#222]" />
  </div>
);

const pair = "flex h-5 w-[41px] overflow-hidden rounded-[4px] border border-[#222] bg-[#404040] text-[12px] text-white divide-x divide-[#222]";
const pairKey = "flex flex-1 items-center justify-center leading-none";

const TrackRow = ({ row }: { row: Row }) => {
  const p = palettes[row.tone ?? "grey"];
  const selected = row.name === "Bass";
  return (
    <div className={clsx("flex shrink-0 pl-px", row.h, row.indent && "pl-[22px]")}>
      <div className={clsx("flex w-5 shrink-0 flex-col border-b border-[#222] text-[12px]", row.folder ? "bg-[#2a2a2a]" : p.name)}>
        {row.folder ? (
          <>
            <span className="flex h-[23px] items-center justify-center">
              <OpenFolder />
            </span>
            {row.tone === "orchid" ? (
              <svg viewBox="0 0 20 18" className="h-[18px] w-5" fill="#b83fd6">
                <path d="M0 0h20v18z" />
              </svg>
            ) : (
              <span className={clsx("flex-1", p.name)} />
            )}
          </>
        ) : (
          <span className={clsx("mt-auto mb-3 text-center leading-none", selected ? "text-[#134]" : "text-white")}>{row.no}</span>
        )}
      </div>
      <div className={clsx("ml-px flex flex-1 gap-1 border-b border-[#222] pt-[5px] pl-[10px]", selected ? "bg-[#1fcfc9]" : "bg-[#4a4a4a]")}>
        <div className={pair}>
          <button className={pairKey}>M</button>
          <button className={pairKey}>S</button>
        </div>
        <div className={pair}>
          <button aria-label="Record arm" className={pairKey}>
            {row.auto ? "A" : <RecDot />}
          </button>
          <button aria-label="Monitor" className={pairKey}>
            <SpeakerIcon />
          </button>
        </div>
        <span className="ml-[2px] text-[12px] leading-5 text-white">{row.name}</span>
      </div>
      <div className="w-[13px] shrink-0" />
    </div>
  );
};

const EnvRow = ({ row }: { row: Row }) => (
  <div className={clsx("flex shrink-0 items-center bg-[#292929] pt-[2px]", row.h)}>
    <span className={clsx("flex shrink-0 items-center justify-start", row.indent ? "w-[53px]" : "w-8")}>{!row.indent && <EnvelopeIcon />}</span>
    <div className="flex h-5 overflow-hidden rounded-[3px] border border-[#222] text-[12px] text-white">
      <button aria-label="Arm envelope" className="flex w-7 items-center justify-center bg-[#cb0900]">
        <RecDot />
      </button>
      <span className="w-[137px] bg-[#380707] pl-2 leading-[18px]">{row.name}</span>
      <button aria-label="Envelope settings" className="flex w-9 items-center justify-center gap-[3px] bg-[#404040]">
        <Settings size={13} />
        <ChevronDown size={11} />
      </button>
    </div>
  </div>
);

const TrackPanel = () => (
  <aside className="flex w-[343px] shrink-0 flex-col pl-[2px]">
    <TcpToolbar />
    <div className="mt-1 flex flex-1 flex-col border-b border-[#bbb] bg-[#222]">
      <div className="flex h-[6px] shrink-0 pl-[33px]">
        <span className="h-[3px] w-7 bg-[#cb0900]" />
        <span className="h-[3px] w-[137px] bg-[#380707]" />
        <span className="ml-12 h-[3px] w-9 rounded-b bg-[#8a8a8a]" />
      </div>
      {rows.map((row, i) => (row.kind === "env" ? <EnvRow key={i} row={row} /> : <TrackRow key={i} row={row} />))}
    </div>
    <p className="h-[17px] overflow-hidden text-[10px] leading-[18px] whitespace-nowrap text-white">
      Bass [FX] ReaEQ, RX 9 Guitar De-noise, (PM-Retro Limiter), (HoRNet Channel)
    </p>
  </aside>
);

/* ---------- arrange ---------- */

const bars: [number, string, string][] = [
  [110, "2465.1.00", "1:22:08.000"],
  [320, "2497.1.00", "1:23:12.000"],
  [530, "2529.1.00", "1:24:16.000"],
  [739, "2561.1.00", "1:25:20.000"],
  [949, "2593.1.00", "1:26:24.000"],
  [1159, "2625.1.00", "1:27:28.000"],
  [1368, "2657.1.00", "1:28:32.000"],
];

const gridX = Array.from({ length: 110 }, (_, i) => Math.round(6.2 + i * 13.1) + 0.5);

const markers: [number, string, string?][] = [
  [380, "28"],
  [585, "18"],
  [803, "22", "GuitFX"],
  [889, "29"],
];

const Ruler = () => (
  <div className="relative h-[66px] shrink-0 overflow-hidden bg-[#222]">
    <div className="h-[13px] w-[1124px] rounded-r-[4px] border border-l-0 border-[#e8f0e0] bg-[#006405] pl-[6px] font-['DejaVu_Sans'] text-[10px] leading-[11px] text-[#e8ffb0]">
      {"<<"}&nbsp; 3 &nbsp;Beeboppotamus1
    </div>
    <div className="h-[13px] bg-[#363636]" />
    {markers.map(([x, n, text]) => (
      <div key={n} className="absolute top-[13px] flex h-[13px] items-center gap-1 font-['DejaVu_Sans'] text-[10px]" style={{ left: x }}>
        <span className="flex h-[13px] w-[21px] items-center justify-center rounded-[4px] border border-[#eee] bg-[#9c0000] text-[#ffe98a]">{n}</span>
        <span className="text-[#e8f07a]">{text}</span>
      </div>
    ))}
    <svg className="absolute bottom-0 left-0 h-[30px] w-full" stroke="#fff">
      {gridX.map((x) => (
        <path key={x} d={`M${x} 22v8`} />
      ))}
      {bars.map(([x]) => (
        <path key={x} d={`M${x + 0.5} 0v30`} />
      ))}
    </svg>
    {bars.map(([x, bar, time]) => (
      <div key={x} className="absolute top-[38px] text-[12px] leading-none text-white" style={{ left: x + 4 }}>
        <p className="border-b border-white leading-[13px]">{bar}</p>
        <p className="text-[11px] leading-[12px]">{time}</p>
      </div>
    ))}
  </div>
);

const Arrange = () => (
  <div className="relative flex-1 overflow-hidden border-t border-[#5c7fbd] bg-[#6f6f6f]">
    <div className="h-[5px] border-b border-[#757575] bg-[#959595]" />
    {rows.map((row, i) => (
      <div key={i} className={clsx("relative border-b border-[#707070]", row.h, row.lane ?? "bg-[#959595]")}>
        {row.sum && (
          <svg className="absolute top-0 left-0 h-full w-full overflow-visible">
            <path
              d={wavePath(waves[row.sum], 0, 1423, row.kind === "env" ? 11 : 18, row.kind === "env" ? 0.5 : 1)}
              fill={row.kind === "env" ? "#5a6c98" : "#7b7b7b"}
            />
          </svg>
        )}
        {row.clips?.map((clip) => <ClipBox key={clip.from} clip={clip} />)}
      </div>
    ))}
    <svg className="pointer-events-none absolute inset-0 h-full w-full">
      {gridX.map((x) => (
        <path key={x} d={`M${x} 0V900`} stroke="#000" strokeOpacity=".5" strokeDasharray="2 2" />
      ))}
      {markers.map(([x]) => (
        <path key={x} d={`M${x + 0.5} 0V900`} stroke="#9c0010" />
      ))}
      <path d="M1123.500 0V900" stroke="#0c5c12" strokeWidth="1.500" />
    </svg>
  </div>
);

const ZoomDot = ({ minus }: { minus?: boolean }) => (
  <svg viewBox="0 0 14 14" className="size-[14px] shrink-0">
    <circle cx="7" cy="7" r="6.500" fill="#8a8a8a" />
    <path d={minus ? "M3 7h8" : "M3 7h8M7 3v8"} stroke="#222" strokeWidth="1.200" />
  </svg>
);

const Timeline = () => (
  <main className="flex min-w-0 flex-1 flex-col">
    <Ruler />
    <div className="flex min-h-0 flex-1">
      <Arrange />
      <div className="flex w-[17px] shrink-0 flex-col items-center gap-[6px] bg-[#222] pt-[5px] pb-px">
        <svg viewBox="0 0 10 10" className="size-[10px] shrink-0" fill="#aaa">
          <path d="M0 7 5 0l5 7zM0 8h10v1H0z" />
        </svg>
        <div className="mt-12 flex w-[11px] flex-1 flex-col items-center rounded-full bg-[#4a4a4a] pt-[358px]">
          <span className="h-[2px] w-[5px] bg-[#222]" />
        </div>
        <svg viewBox="0 0 10 10" className="mt-5 size-[10px] shrink-0" fill="#aaa">
          <path d="m0 3 5 7 5-7zM0 1h10v1H0z" />
        </svg>
        <ZoomDot />
        <ZoomDot minus />
      </div>
    </div>
    <div className="flex h-[17px] shrink-0 items-center bg-[#222] pr-[18px] pl-1">
      <svg viewBox="0 0 10 10" className="size-[10px]" fill="#aaa">
        <path d="M6 0v10L0 5zM8 0h1v10H8z" />
      </svg>
      <div className="ml-[325px] flex h-[11px] w-[22px] items-center justify-center gap-[2px] rounded-full bg-[#555]">
        <span className="size-1 rounded-full bg-[#222]" />
        <span className="h-1 w-px bg-[#222]" />
        <span className="size-1 rounded-full bg-[#222]" />
      </div>
      <div className="ml-auto flex items-center gap-2">
        <svg viewBox="0 0 10 10" className="size-[10px]" fill="#aaa">
          <path d="M4 0v10l6-5zM1 0h1v10H1z" />
        </svg>
        <ZoomDot />
        <ZoomDot minus />
      </div>
    </div>
  </main>
);

/* ---------- master ---------- */

const masterFx = ["Ghz CanOpener Studio", "Ghz Lossy 3", "Ghz Panpot 3", "Ghz Faraday Limiter 3", "Invisible Limiter"];

const MasterMeter = () => (
  <svg viewBox="0 0 71 296" className="h-[296px] w-[71px] bg-[#1e1e1e] font-['DejaVu_Sans'] text-[8px] font-bold">
    <path d="M18 1h35v27H18z" fill="#3b361d" />
    <path d="M18 28h35v110H18z" fill="#222e22" />
    <path d="M17.500 1v282M53.500 1v282" stroke="#444" />
    {["6", "", "18", "", "30", "", "42", "", "54"].map((t, i) => (
      <Fragment key={i}>
        <path d={`M13 ${28.5 + i * 27.5}h45`} stroke="#3c3c3c" />
        <text x="36" y={31 + i * 27.5} textAnchor="middle" fill="#eee">
          {t}
        </text>
      </Fragment>
    ))}
    {["0", "12", "24", "36"].map((t, i) => (
      <g key={t} fill={i ? "#5c5a10" : "#d27008"}>
        <text x="8" y={58 + i * 55} textAnchor="middle">
          {t}
        </text>
        <text x="62" y={58 + i * 55} textAnchor="middle">
          {t}
        </text>
      </g>
    ))}
    <text x="17" y="294" textAnchor="middle" fill="#eee" className="font-['Liberation_Sans'] text-[10px]">
      L-S
    </text>
    <text x="53" y="294" textAnchor="middle" fill="#eee" className="font-['Liberation_Sans'] text-[10px]">
      -142
    </text>
  </svg>
);

const Master = () => (
  <aside className="-mt-[2px] ml-[6px] flex w-[123px] shrink-0 flex-col border border-b-0 border-[#222] bg-[#353535] px-px pt-2 text-white">
    <div className="flex h-10 shrink-0 flex-col items-center justify-between bg-[#212121] pt-1 pb-[6px]">
      <svg viewBox="0 0 12 12" className="size-3" fill="none" stroke="#f01818">
        <path d="M2 1h3v10H2zM9 1v10M7 5h4" strokeWidth="1.500" />
      </svg>
      <span className="text-[11px] leading-none text-[#ccc]">
        I Logic<span className="text-[10px]">3.</span>
        <span className="text-[10px] text-[#f01818]">90</span>
      </span>
    </div>
    <div className="relative mt-px flex h-[199px] shrink-0 flex-col gap-px bg-[#282828]">
      {masterFx.map((name) => (
        <button key={name} className="h-[18px] bg-[#3e3e3e] text-[11px] leading-[17px] whitespace-nowrap text-[#f5a00f]">
          {name}
        </button>
      ))}
      <div className="absolute right-0 bottom-0 text-[#555]">
        <Hatch />
      </div>
    </div>
    <div className="mt-1 h-[200px] shrink-0 overflow-hidden">
      <button className="flex h-5 w-full items-center justify-between bg-[#202020] text-[11px]">
        <span className="w-[86px] border-r border-[#888] pl-[3px] text-left">MainL / MainR</span>
        <SendKnob deg={0} />
      </button>
      {Array.from({ length: 9 }, (_, i) => (
        <div key={i} className="flex h-[21px] items-center justify-between border-b-2 border-[#333] pr-[2px]">
          <span className="h-full w-[92px] bg-[#282828]" />
          <span className="size-4 rounded-full bg-[#2d2d2d]" />
        </div>
      ))}
    </div>
    <div className="flex h-[19px] shrink-0 bg-[#222]">
      <div className="flex w-[75px] items-center bg-[#350202] pl-px">
        <button aria-label="Bypass master FX" className="flex h-[15px] w-[18px] items-center justify-center rounded-[2px] bg-[#7d0000] text-black">
          <Power size={10} />
        </button>
        <button className="ml-3 text-[11px] text-[#ff1e10]">FX</button>
      </div>
    </div>
    <div className="mt-px flex h-5 shrink-0 border-y border-[#222]">
      <button aria-label="Master envelopes" className="flex w-[75px] items-center justify-center border-r border-[#222]">
        <EnvelopeIcon />
      </button>
      <button className="flex-1 font-['DejaVu_Sans'] text-[9px] text-[#f5a00f]">menu</button>
    </div>
    <div className="flex h-[54px] shrink-0 border-b border-[#222]">
      <div className="flex w-[75px] flex-col items-center border-r border-[#222] pt-1">
        <PanKnob pan="center" />
        <span className="-mt-[2px] text-[10px] leading-3 font-semibold">center</span>
      </div>
      <button aria-label="Master list" className="flex flex-1 items-center justify-center">
        <svg viewBox="0 0 22 18" className="h-[18px] w-[22px]" stroke="#fff">
          <path d="M6 2h15M6 9h15M6 16h15M1 2h2M1 9h2M1 16h2" strokeWidth="1.300" />
        </svg>
      </button>
    </div>
    <div className="flex shrink-0 bg-[#4a4a4a]">
      <div className="flex w-[75px] flex-col border-r border-[#2a2a2a] pt-[3px] pl-[2px]">
        <div className="mb-1 flex gap-[3px] text-[10px] font-bold text-[#0bdc2a]">
          <span className="flex h-[18px] w-[34px] items-center justify-center bg-[#222]">-123</span>
          <span className="flex h-[18px] w-[34px] items-center justify-center bg-[#222]">-inf</span>
        </div>
        <MasterMeter />
        <div className="mt-px grid h-[41px] w-[69px] grid-cols-2 grid-rows-2 gap-px overflow-hidden rounded-[5px] border-2 border-[#2a2a2a] bg-[#2a2a2a] *:bg-[#404040]">
          <button className="text-[11px]">Mono</button>
          <button aria-label="Monitor" className={padKey}>
            <svg viewBox="0 0 16 12" className="h-3 w-4" fill="none" stroke="#fff">
              <circle cx="8" cy="6" r="3" fill="#fff" />
              <path d="M3 1.500q-3 4.500 0 9M13 1.500q3 4.500 0 9" />
            </svg>
          </button>
          <button className={padKey}>M</button>
          <button className={padKey}>S</button>
        </div>
      </div>
      <div className="relative flex flex-1 flex-col items-center pt-1">
        <span className="flex h-[17px] w-[34px] items-center justify-center bg-[#222] text-[10px] font-bold shadow">-2.80</span>
        <div className="relative mt-1 h-[290px] w-full">
          <svg viewBox="0 0 40 290" className="absolute top-0 left-0 h-[290px] w-10">
            {majorTicks.map((y, i) => (
              <Fragment key={y}>
                <path d={`M11 ${y + 0.5}h10`} stroke="#8a8a8a" />
                {majorTicks[i + 1] &&
                  [1, 2, 3, 4].map((k) => <path key={k} d={`M18 ${Math.round(y + ((majorTicks[i + 1] - y) * k) / 5) + 0.5}h3`} stroke="#7c7c7c" />)}
              </Fragment>
            ))}
            <path d="M11 70h10v17H11z" fill="#7a7a7a" />
            <path d="M22 0v286" stroke="#222" strokeWidth="2" />
          </svg>
          <input
            type="range"
            aria-label="Master volume"
            min={0}
            max={249}
            defaultValue={162}
            className={clsx("absolute top-0 left-[11px] h-[286px] w-[21px] appearance-none bg-transparent [direction:rtl] [writing-mode:vertical-lr]", thumb)}
          />
        </div>
        <button className="mt-[5px] flex h-[41px] w-[34px] flex-col items-center gap-px rounded-[4px] border border-[#2a2a2a] bg-[#404040] pt-1 text-[10px] text-[#f5a00f]">
          <span className="h-[6px] w-[17px] border border-[#222] bg-[#6a6a6a]" />
          <span className="h-[6px] w-[17px] border border-[#222] bg-[#c87a00]" />
          <span className="h-1 w-[17px] bg-[#2c2c2c]" />
          Route
        </button>
      </div>
    </div>
    <div className="h-5 shrink-0 border-b border-[#222] bg-[#4a4a4a] text-center text-[12px] leading-6">Master</div>
  </aside>
);

/* ---------- transport ---------- */

const transportIcons: [string, string][] = [
  ["Go to start", "M9 8v12h1.500V8zM19 8v12l-8-6z"],
  ["Stop", "M9 9h11v11H9z"],
  ["Play", "M10 7l11 7-11 7z"],
  ["Pause", "M9 8h4v12H9zM15 8h4v12h-4z"],
  ["Go to end", "M18 8v12h1.500V8zM9 8v12l8-6z"],
];

const Transport = () => (
  <footer className="m-1 mt-1 flex h-[51px] items-center rounded-lg border border-[#222] bg-[linear-gradient(180deg,#545454,#444)] pr-8 text-white">
    <div className="ml-[340px] flex items-center gap-1 rounded-full bg-[#484848] px-[2px] py-1">
      {transportIcons.map(([label, d]) => (
        <button key={label} aria-label={label}>
          <svg viewBox="0 0 28 28" className="size-7">
            <circle cx="14" cy="14" r="13.300" fill="#4c4c4c" stroke="#262626" strokeWidth="1.300" />
            <path d={d} fill="#fff" />
          </svg>
        </button>
      ))}
      <button aria-label="Record">
        <svg viewBox="0 0 28 28" className="size-7">
          <circle cx="14" cy="14" r="13.300" fill="#4c4c4c" stroke="#262626" strokeWidth="1.300" />
          <circle cx="14" cy="14" r="7.500" fill="#fff" />
          <path d="M10 6H6v4M18 6h4v4M10 22H6v-4M18 22h4v-4" fill="none" stroke="#fff" />
        </svg>
      </button>
    </div>
    <div className="ml-[9px] flex h-[43px] gap-px bg-[#333] *:bg-[#222]">
      <div className="flex w-[81px] flex-col text-[11px]">
        <button className="h-[22px] border-b-2 border-[#383838]">Rec Mode</button>
        <button className="flex flex-1 items-center gap-4 pl-[6px] text-[#f5a00f]">
          <span className="size-[5px] rounded-full bg-[#bbb]" />
          Item
        </button>
      </div>
      <div className="flex w-[344px] items-center justify-between pr-[9px] pl-5">
        <span className="text-[23px] font-bold whitespace-nowrap">635.4.99 / 21:09.994</span>
        <span className="text-[16px]">[Stopped]</span>
      </div>
      <button className="w-[56px] text-[16px] text-[#f5a00f]">120</button>
      <button className="w-[58px] text-[16px]">4/4</button>
      <div className="flex w-[53px] flex-col text-[11px]">
        <span className="flex h-6 items-center justify-center border-b border-[#444] text-[12px]">1.0</span>
        <span className="flex flex-1 items-center justify-center">Rate</span>
      </div>
      <button className="flex w-[74px] flex-col text-[11px]">
        <span className="flex h-6 w-full items-center justify-center border-b border-[#444]">
          <svg viewBox="0 0 12 12" className="size-3">
            <path d="M6 0 10 9H2zM1 11h10" fill="#fff" stroke="#fff" />
            <path d="m1 2 7 6" stroke="#222" />
          </svg>
        </span>
        <span className="flex w-full flex-1 items-center justify-center bg-[repeating-linear-gradient(135deg,#1b1b1b_0_3px,#252525_3px_6px)]">Tap Tempo</span>
      </button>
    </div>
    <div className="ml-[9px] flex items-center gap-1 rounded-full bg-[#484848] px-[2px] py-1">
      <button aria-label="Repeat" className="flex size-7 items-center justify-center rounded-full border border-[#262626] bg-[#b88300]">
        <RefreshCw size={18} strokeWidth={1.5} />
      </button>
      <button aria-label="Automation" className="flex size-7 items-center justify-center rounded-full border border-[#262626] bg-[#4c4c4c]">
        <EnvelopeIcon />
      </button>
      {["R", "T", "L", "P", "W"].map((k) => (
        <button key={k} className="flex size-7 items-center justify-center rounded-full border border-[#262626] bg-[#4c4c4c] text-[11px] font-bold text-[#3c3c3c]">
          <span className="flex size-4 items-center justify-center rounded-[4px] bg-[#585858]">{k}</span>
        </button>
      ))}
    </div>
    <div className="ml-auto w-[220px] text-[11px]">
      <div className="flex h-5 items-center rounded-full bg-[#222] px-[5px]">
        <span className="leading-none">−</span>
        <input
          type="range"
          aria-label="Play rate"
          defaultValue={50}
          className="h-5 min-w-0 flex-1 appearance-none bg-transparent [&::-webkit-slider-thumb]:size-[19px] [&::-webkit-slider-thumb]:appearance-none [&::-webkit-slider-thumb]:rounded-full [&::-webkit-slider-thumb]:bg-[#b0b0b0]"
        />
        <span className="leading-none">+</span>
      </div>
      <div className="mt-[3px] flex justify-between pr-[6px] leading-4">
        <span>Selection:</span>
        <span>1.1.00</span>
        <span>1.1.00</span>
        <span>0.0.00</span>
      </div>
    </div>
  </footer>
);

const App = () => (
  <div className="min-h-screen overflow-hidden bg-[#4a4a4a] font-['Liberation_Sans',Arial,sans-serif]">
    <WaveDefs />
    <Mixer />
    <MenuBar />
    <div className="flex h-4 items-start justify-between">
      <div className="ml-[6px] flex h-4 items-center gap-1 bg-[#222] pr-1 pl-[14px] text-[11px] font-bold text-white [clip-path:polygon(0_0,97%_0,100%_100%,3%_100%)]">
        *PinkPong_2023_ORIGINAL_PROJECT.rpp
        <span className="size-2 rounded-full bg-[#aaa]" />
      </div>
      <button className="flex h-4 items-center gap-[2px] bg-[#850606] px-[2px] text-[10px] font-bold text-white">
        MONITOR FX <Power size={10} />
      </button>
    </div>
    <Toolbar />
    <div className="flex h-[951px]">
      <TrackPanel />
      <div className="w-2 shrink-0" />
      <Timeline />
      <Master />
    </div>
    <Transport />
  </div>
);

export default App;
